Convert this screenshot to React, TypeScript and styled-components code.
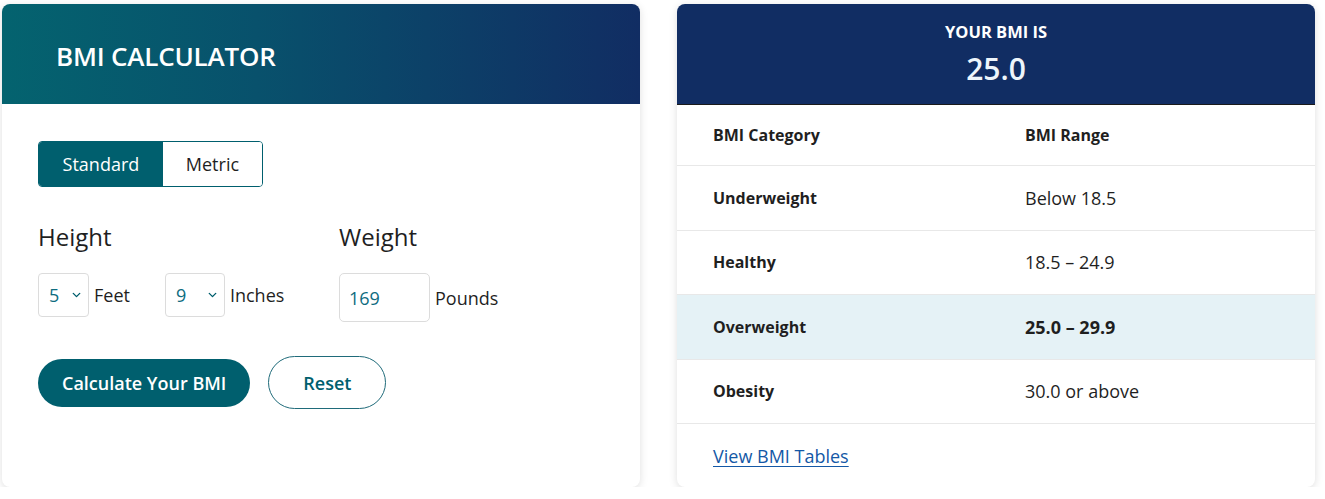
import React, { useState } from 'react';
import styled, { createGlobalStyle } from 'styled-components';
import { ChevronDown } from 'lucide-react';

const GlobalStyle = createGlobalStyle`
  html, body {
    margin: 0;
    padding: 0;
    background: #ffffff;
  }
  body {
    font-family: "Open Sans", "Noto Sans", sans-serif;
    color: #1f1f1f;
  }
  * { box-sizing: border-box; }
`;

const teal = '#005f6e';
const navy = '#112d63';

const Page = styled.div`
  display: flex;
  gap: 37px;
  padding: 4px 10px 0 2px;
`;

const Card = styled.section`
  flex: 1;
  height: 483px;
  display: flex;
  flex-direction: column;
  background: #fff;
  border-radius: 8px;
  overflow: hidden;
  box-shadow: 0 2px 8px rgba(0, 0, 0, 0.13);
`;

const CalcHeader = styled.header`
  height: 100px;
  flex-shrink: 0;
  display: flex;
  align-items: center;
  padding: 4px 0 0 54px;
  background: linear-gradient(90deg, #04636f 0%, #08516c 40%, #112d63 100%);
`;

const Title = styled.h1`
  margin: 0;
  color: #fff;
  font-size: 26px;
  font-weight: 600;
  letter-spacing: -0.2px;
`;

const CalcBody = styled.div`
  padding: 37px 36px 0;
  display: flex;
  flex-direction: column;
`;

const Toggle = styled.div`
  display: flex;
  width: 225px;
  height: 46px;
  border: 1px solid ${teal};
  border-radius: 4px;
  overflow: hidden;
`;

const ToggleOption = styled.button<{ $active?: boolean }>`
  border: 0;
  margin: 0;
  padding: 0;
  width: ${(p) => (p.$active ? '125px' : '100px')};
  background: ${(p) => (p.$active ? teal : '#fff')};
  color: ${(p) => (p.$active ? '#fff' : '#1f1f1f')};
  font-family: inherit;
  font-size: 18px;
  cursor: pointer;
`;

const Fields = styled.div`
  display: flex;
  margin-top: 34px;
`;

const FieldGroup = styled.div<{ $width?: number }>`
  width: ${(p) => (p.$width ? `${p.$width}px` : 'auto')};
  display: flex;
  flex-direction: column;
`;

const FieldLabel = styled.div`
  font-size: 24px;
  font-weight: 500;
  line-height: 32px;
  color: #1f1f1f;
`;

const FieldRow = styled.div`
  display: flex;
  align-items: flex-start;
  gap: 35px;
  margin-top: 20px;
`;

const Pair = styled.label<{ $height: number }>`
  display: flex;
  align-items: center;
  gap: 5px;
  height: ${(p) => p.$height}px;
  font-size: 18px;
  color: #1f1f1f;
`;

const SelectWrap = styled.div<{ $width: number }>`
  position: relative;
  width: ${(p) => p.$width}px;
  height: 44px;
`;

const Select = styled.select`
  appearance: none;
  width: 100%;
  height: 100%;
  border: 1px solid #dcdcdc;
  border-radius: 4px;
  background: #fff;
  padding: 0 0 0 10px;
  font-family: inherit;
  font-size: 18px;
  color: #0e6c80;
`;

const Chevron = styled.span`
  position: absolute;
  right: 6px;
  top: 50%;
  transform: translateY(-50%);
  display: flex;
  color: ${teal};
  pointer-events: none;
`;

const NumberInput = styled.input`
  width: 91px;
  height: 49px;
  border: 1px solid #dcdcdc;
  border-radius: 5px;
  padding: 0 0 0 9px;
  font-family: inherit;
  font-size: 18px;
  color: #0e6c80;
`;

const Actions = styled.div`
  display: flex;
  align-items: center;
  gap: 18px;
  margin-top: 34px;
`;

const PrimaryButton = styled.button`
  height: 48px;
  padding: 0 24px;
  border: 0;
  border-radius: 24px;
  background: ${teal};
  color: #fff;
  font-family: inherit;
  font-size: 18px;
  font-weight: 600;
  cursor: pointer;
`;

const OutlineButton = styled.button`
  height: 53px;
  width: 118px;
  border: 1px solid #1f6b7a;
  border-radius: 27px;
  background: #fff;
  color: ${teal};
  font-family: inherit;
  font-size: 18px;
  font-weight: 600;
  cursor: pointer;
`;

const ResultHeader = styled.header`
  height: 101px;
  flex-shrink: 0;
  display: flex;
  flex-direction: column;
  align-items: center;
  padding-top: 17px;
  background: ${navy};
  border-bottom: 1px solid #1a1a1a;
  color: #fff;
`;

const ResultLabel = styled.div`
  font-size: 16.5px;
  font-weight: 700;
  line-height: 22px;
`;

const ResultValue = styled.div`
  margin-top: 6px;
  font-size: 30px;
  font-weight: 600;
  line-height: 40px;
  color: #eef5fb;
`;

const Table = styled.div`
  display: flex;
  flex-direction: column;
`;

const Row = styled.div<{ $highlight?: boolean; $height: number }>`
  box-sizing: content-box;
  display: grid;
  grid-template-columns: 312px 1fr;
  align-items: center;
  height: ${(p) => p.$height}px;
  padding-left: 36px;
  border-bottom: 1px solid #e8e8e8;
  background: ${(p) => (p.$highlight ? '#e5f2f6' : '#fff')};
`;

const CategoryCell = styled.div`
  font-size: 16px;
  font-weight: 700;
  color: #1f1f1f;
`;

const RangeCell = styled.div<{ $bold?: boolean }>`
  font-size: 18px;
  font-weight: ${(p) => (p.$bold ? 700 : 400)};
  color: #1f1f1f;
`;

const Footer = styled.div`
  flex: 1;
  display: flex;
  align-items: center;
  padding-left: 36px;
`;

const TableLink = styled.a`
  color: #1458a6;
  font-size: 18px;
  text-decoration: underline;
  text-underline-offset: 3px;
`;

const categories = [
  { name: 'Underweight', range: 'Below 18.5' },
  { name: 'Healthy', range: '18.5 – 24.9' },
  { name: 'Overweight', range: '25.0 – 29.9', current: true },
  { name: 'Obesity', range: '30.0 or above' },
];

const App = () => {
  const [unit, setUnit] = useState('standard');
  return (
    <>
      <GlobalStyle />
      <Page>
        <Card>
          <CalcHeader>
            <Title>BMI CALCULATOR</Title>
          </CalcHeader>
          <CalcBody>
            <Toggle>
              <ToggleOption $active={unit === 'standard'} onClick={() => setUnit('standard')}>
                Standard
              </ToggleOption>
              <ToggleOption $active={unit === 'metric'} onClick={() => setUnit('metric')}>
                Metric
              </ToggleOption>
            </Toggle>
            <Fields>
              <FieldGroup $width={301}>
                <FieldLabel>Height</FieldLabel>
                <FieldRow>
                  <Pair $height={44}>
                    <SelectWrap $width={51}>
                      <Select defaultValue="5">
                        {[4, 5, 6, 7].map((n) => (
                          <option key={n}>{n}</option>
                        ))}
                      </Select>
                      <Chevron>
                        <ChevronDown size={13} strokeWidth={2.5} />
                      </Chevron>
                    </SelectWrap>
                    Feet
                  </Pair>
                  <Pair $height={44}>
                    <SelectWrap $width={60}>
                      <Select defaultValue="9">
                        {Array.from({ length: 12 }, (_, n) => (
                          <option key={n}>{n}</option>
                        ))}
                      </Select>
                      <Chevron>
                        <ChevronDown size={13} strokeWidth={2.5} />
                      </Chevron>
                    </SelectWrap>
                    Inches
                  </Pair>
                </FieldRow>
              </FieldGroup>
              <FieldGroup>
                <FieldLabel>Weight</FieldLabel>
                <FieldRow>
                  <Pair $height={49}>
                    <NumberInput defaultValue="169" />
                    Pounds
                  </Pair>
                </FieldRow>
              </FieldGroup>
            </Fields>
            <Actions>
              <PrimaryButton>Calculate Your BMI</PrimaryButton>
              <OutlineButton>Reset</OutlineButton>
            </Actions>
          </CalcBody>
        </Card>
        <Card>
          <ResultHeader>
            <ResultLabel>YOUR BMI IS</ResultLabel>
            <ResultValue>25.0</ResultValue>
          </ResultHeader>
          <Table>
            <Row $height={60}>
              <CategoryCell>BMI Category</CategoryCell>
              <CategoryCell>BMI Range</CategoryCell>
            </Row>
            {categories.map((c) => (
              <Row key={c.name} $height={63.5} $highlight={c.current}>
                <CategoryCell>{c.name}</CategoryCell>
                <RangeCell $bold={c.current}>{c.range}</RangeCell>
              </Row>
            ))}
          </Table>
          <Footer>
            <TableLink href="#">View BMI Tables</TableLink>
          </Footer>
        </Card>
      </Page>
    </>
  );
};

export default App;
